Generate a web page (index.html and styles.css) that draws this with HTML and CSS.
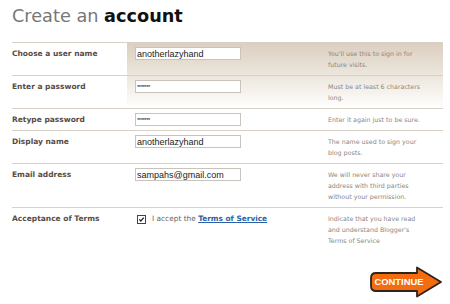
FILE: index.html
```html
<!DOCTYPE html>
<html lang="en">
<head>
    <meta charset="UTF-8">
    <meta name="viewport" content="width=device-width, initial-scale=1.0">
    <title>Create an account</title>
    <link rel="stylesheet" href="styles.css">
</head>
<body>
    <div class="page">
        <h1 class="title">Create an <b>account</b></h1>

        <div class="signup">
            <div class="row tinted">
                <label class="label" for="username">Choose a user name</label>
                <div class="field"><input type="text" id="username" value="anotherlazyhand"></div>
                <div class="hint">You'll use this to sign in for<br>future visits.</div>
            </div>

            <div class="row tinted">
                <label class="label" for="password">Enter a password</label>
                <div class="field"><input type="text" class="secret" id="password" value="*******"></div>
                <div class="hint">Must be at least 6 characters<br>long.</div>
            </div>

            <div class="row">
                <label class="label" for="password2">Retype password</label>
                <div class="field"><input type="text" class="secret" id="password2" value="*******"></div>
                <div class="hint">Enter it again just to be sure.</div>
            </div>

            <div class="row">
                <label class="label" for="displayName">Display name</label>
                <div class="field"><input type="text" id="displayName" value="anotherlazyhand"></div>
                <div class="hint">The name used to sign your<br>blog posts.</div>
            </div>

            <div class="row">
                <label class="label" for="email">Email address</label>
                <div class="field"><input type="text" id="email" value="sampahs@gmail.com"></div>
                <div class="hint">We will never share your<br>address with third parties<br>without your permission.</div>
            </div>

            <div class="row">
                <div class="label">Acceptance of Terms</div>
                <div class="field terms">
                    <span class="check">
                        <svg width="7" height="7" viewBox="0 0 7 7"><path d="M1.3 3.4 L2.8 5 L5.8 1.6" fill="none" stroke="#222" stroke-width="1.3"/></svg>
                    </span>
                    <span>I accept the <a href="#">Terms of Service</a></span>
                </div>
                <div class="hint">Indicate that you have read<br>and understand Blogger's<br>Terms of Service</div>
            </div>
        </div>

        <div class="actions">
            <a href="#" class="continue">
                <svg width="73" height="32" viewBox="0 0 73 32">
                    <path d="M6 7 H47 V1.5 L71 16 L47 30.5 V25 H6 Q1 25 1 20 V12 Q1 7 6 7 Z" fill="#f36c10" stroke="#2e241c" stroke-width="1.8" stroke-linejoin="round"/>
                    <text x="29" y="19.3" text-anchor="middle" class="continue-text">CONTINUE</text>
                </svg>
            </a>
        </div>
    </div>
</body>
</html>
```

FILE: styles.css
```css
body {
    margin: 0;
    background-color: #ffffff;
    font-family: "DejaVu Sans", Verdana, sans-serif;
}

.page {
    width: 431px;
    margin-left: 12px;
}

.title {
    margin: 6px 0 16px;
    font-size: 17.7px;
    font-weight: normal;
    line-height: 20px;
    color: #777777;
}

.title b {
    color: #111111;
}

.row {
    display: grid;
    grid-template-columns: 115px 201px 115px;
    border-top: 1px solid #d9d1c6;
}

.row.tinted {
    background: linear-gradient(#dbcfbf, #ece6dd) no-repeat 115px 0 / 316px 100%;
}

.row.tinted + .row.tinted {
    background-image: linear-gradient(#ece6dd, #ffffff);
}

.label {
    padding: 5px 0;
    font-size: 7.5px;
    font-weight: bold;
    line-height: 11px;
    color: #564c44;
}

.field {
    display: flex;
    align-items: flex-start;
    padding: 4px 0 4px 8px;
}

.field input {
    box-sizing: border-box;
    width: 106px;
    height: 13px;
    margin: 0;
    padding: 0 1px;
    border: 1px solid #c9c3bb;
    background-color: #ffffff;
    font-family: "Liberation Sans", Arial, sans-serif;
    font-size: 9px;
    color: #222222;
}

.field input.secret {
    font-size: 6px;
    letter-spacing: -0.5px;
}

.hint {
    padding: 5px 0;
    font-size: 6.3px;
    line-height: 11px;
    color: #8b8680;
}

.terms {
    align-self: start;
    align-items: center;
    gap: 6px;
    padding: 6px 0 0 10px;
    font-size: 7.4px;
    line-height: 10px;
    color: #666666;
}

.check {
    display: flex;
    width: 7px;
    height: 7px;
    border: 1px solid #444444;
    background-color: #ffffff;
}

.terms a {
    color: #2b5fa6;
    font-weight: bold;
}

.actions {
    display: flex;
    justify-content: flex-end;
    margin-top: 15px;
}

.continue {
    display: block;
    line-height: 0;
}

.continue-text {
    font-family: "Liberation Sans", Arial, sans-serif;
    font-size: 9.4px;
    font-weight: bold;
    fill: #ffffff;
}
```
